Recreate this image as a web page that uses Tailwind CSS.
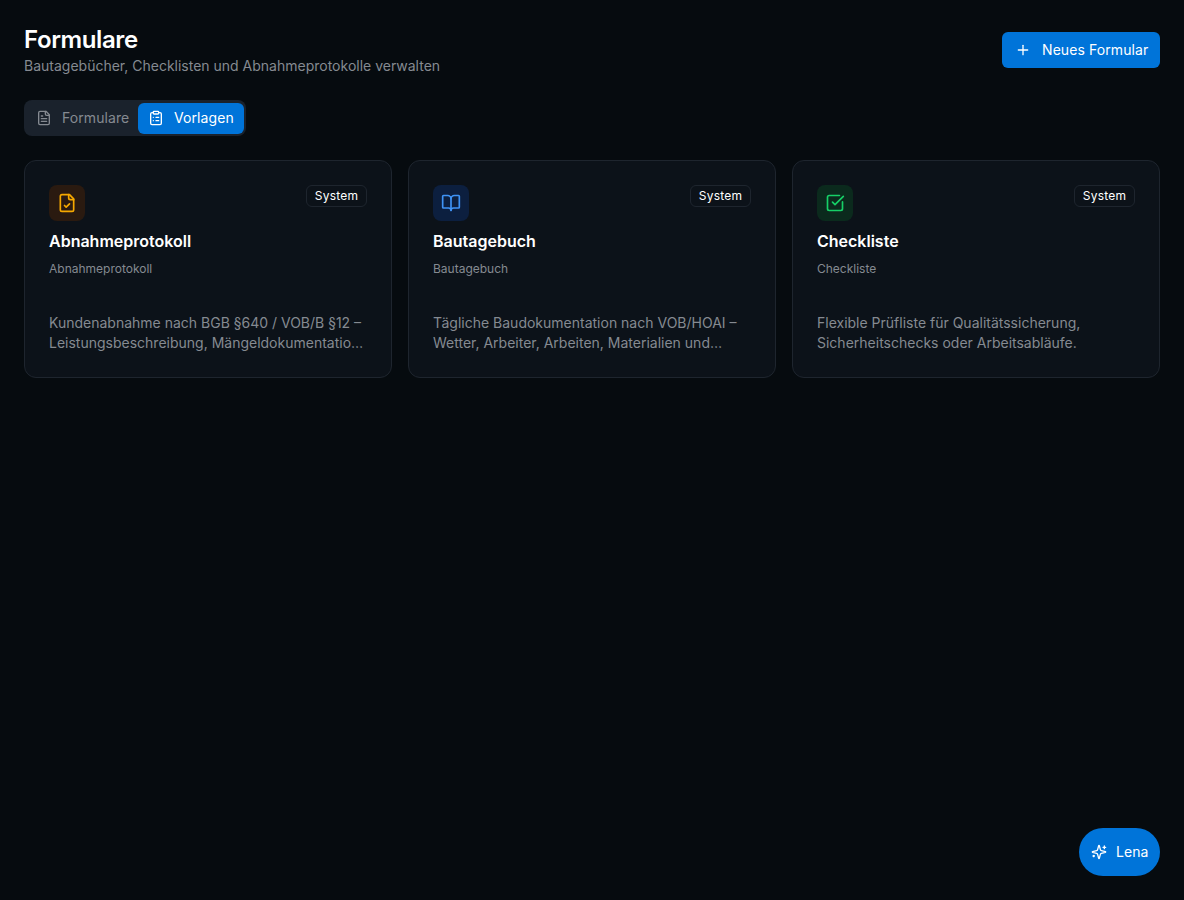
<!DOCTYPE html>
<html lang="de">
<head>
  <meta charset="UTF-8">
  <meta name="viewport" content="width=device-width, initial-scale=1.0">
  <title>Formulare</title>
  <script src="https://cdn.jsdelivr.net/npm/@tailwindcss/browser@4"></script>
</head>
<body class="bg-[#060b0f] font-['Inter',sans-serif] text-white min-h-[900px] overflow-hidden">
  <main class="p-6">
    <!-- Kopf -->
    <div class="flex items-start justify-between">
      <div>
        <h1 class="text-2xl leading-8 font-semibold tracking-[-0.4px]">Formulare</h1>
        <p class="text-sm leading-5 text-[#858a91]">Bautagebücher, Checklisten und Abnahmeprotokolle verwalten</p>
      </div>
      <button class="mt-2 h-9 w-[158px] flex items-center gap-[11px] pl-[13px] rounded-md bg-[#0074d9] text-sm tracking-[0.08px]">
        <svg class="size-4" viewBox="0 0 24 24" fill="none" stroke="currentColor" stroke-width="2" stroke-linecap="round" stroke-linejoin="round"><path d="M5 12h14"/><path d="M12 5v14"/></svg>
        Neues Formular
      </button>
    </div>

    <!-- Tabs -->
    <div class="mt-6 flex h-9 w-[222px] items-start rounded-lg bg-[#1a222c] pt-[3px] pl-1 pr-[2px]">
      <div class="flex flex-1 h-[30px] items-center gap-2 pl-2 text-sm tracking-[0.08px] text-[#858a91]">
        <svg class="size-4" viewBox="0 0 24 24" fill="none" stroke="currentColor" stroke-width="2" stroke-linecap="round" stroke-linejoin="round"><path d="M15 2H6a2 2 0 0 0-2 2v16a2 2 0 0 0 2 2h12a2 2 0 0 0 2-2V7Z"/><path d="M14 2v4a2 2 0 0 0 2 2h4"/><path d="M10 9H8"/><path d="M16 13H8"/><path d="M16 17H8"/></svg>
        <span class="ml-[2px]">Formulare</span>
      </div>
      <div class="flex w-[106px] h-[31px] items-center gap-2 pl-[10px] pb-px rounded-md bg-[#0074d9] text-sm tracking-[0.08px]">
        <svg class="size-4" viewBox="0 0 24 24" fill="none" stroke="currentColor" stroke-width="2" stroke-linecap="round" stroke-linejoin="round"><rect width="8" height="4" x="8" y="2" rx="1" ry="1"/><path d="M16 4h2a2 2 0 0 1 2 2v14a2 2 0 0 1-2 2H6a2 2 0 0 1-2-2V6a2 2 0 0 1 2-2h2"/><path d="M12 11h4"/><path d="M12 16h4"/><path d="M8 11h.01"/><path d="M8 16h.01"/></svg>
        <span class="ml-[2px]">Vorlagen</span>
      </div>
    </div>

    <!-- Vorlagen -->
    <div class="mt-6 grid grid-cols-3 gap-4">
      <div class="h-[218px] rounded-xl border border-[#1e252e] bg-[#0c1219] p-6">
        <div class="flex items-start justify-between">
          <div class="flex size-9 items-center justify-center rounded-lg bg-[#2a1a10] text-[#f5a800]">
            <svg class="size-5" viewBox="0 0 24 24" fill="none" stroke="currentColor" stroke-width="2" stroke-linecap="round" stroke-linejoin="round"><path d="M15 2H6a2 2 0 0 0-2 2v16a2 2 0 0 0 2 2h12a2 2 0 0 0 2-2V7Z"/><path d="M14 2v4a2 2 0 0 0 2 2h4"/><path d="m9 15 2 2 4-4"/></svg>
          </div>
          <span class="flex h-[22px] w-[61px] justify-center items-center rounded-md border border-[#1e252e] text-xs tracking-[0.2px]">System</span>
        </div>
        <h3 class="mt-2 text-base leading-6 font-semibold">Abnahmeprotokoll</h3>
        <p class="mt-[6px] text-xs leading-5 text-[#858a91]">Abnahmeprotokoll</p>
        <p class="mt-[34px] text-sm leading-5 text-[#858a91] line-clamp-2">Kundenabnahme nach BGB §640 / VOB/B §12 – Leistungsbeschreibung, Mängeldokumentation, Fristen und Unterschriften der Beteiligten.</p>
      </div>

      <div class="h-[218px] rounded-xl border border-[#1e252e] bg-[#0c1219] p-6">
        <div class="flex items-start justify-between">
          <div class="flex size-9 items-center justify-center rounded-lg bg-[#0c1f3f] text-[#3f93f5]">
            <svg class="size-5" viewBox="0 0 24 24" fill="none" stroke="currentColor" stroke-width="2" stroke-linecap="round" stroke-linejoin="round"><path d="M12 7v14"/><path d="M3 18a1 1 0 0 1-1-1V4a1 1 0 0 1 1-1h5a4 4 0 0 1 4 4 4 4 0 0 1 4-4h5a1 1 0 0 1 1 1v13a1 1 0 0 1-1 1h-6a3 3 0 0 0-3 3 3 3 0 0 0-3-3z"/></svg>
          </div>
          <span class="flex h-[22px] w-[61px] justify-center items-center rounded-md border border-[#1e252e] text-xs tracking-[0.2px]">System</span>
        </div>
        <h3 class="mt-2 text-base leading-6 font-semibold">Bautagebuch</h3>
        <p class="mt-[6px] text-xs leading-5 text-[#858a91]">Bautagebuch</p>
        <p class="mt-[34px] text-sm leading-5 text-[#858a91] line-clamp-2">Tägliche Baudokumentation nach VOB/HOAI – Wetter, Arbeiter, Arbeiten, Materialien und besondere Vorkommnisse auf der Baustelle.</p>
      </div>

      <div class="h-[218px] rounded-xl border border-[#1e252e] bg-[#0c1219] p-6">
        <div class="flex items-start justify-between">
          <div class="flex size-9 items-center justify-center rounded-lg bg-[#0b2a1d] text-[#16d067]">
            <svg class="size-5" viewBox="0 0 24 24" fill="none" stroke="currentColor" stroke-width="2" stroke-linecap="round" stroke-linejoin="round"><path d="M21 10.656V19a2 2 0 0 1-2 2H5a2 2 0 0 1-2-2V5a2 2 0 0 1 2-2h12.344"/><path d="m9 11 3 3L22 4"/></svg>
          </div>
          <span class="flex h-[22px] w-[61px] justify-center items-center rounded-md border border-[#1e252e] text-xs tracking-[0.2px]">System</span>
        </div>
        <h3 class="mt-2 text-base leading-6 font-semibold">Checkliste</h3>
        <p class="mt-[6px] text-xs leading-5 text-[#858a91]">Checkliste</p>
        <p class="mt-[34px] text-sm leading-5 text-[#858a91] line-clamp-2">Flexible Prüfliste für Qualitätssicherung, Sicherheitschecks oder Arbeitsabläufe.</p>
      </div>
    </div>
  </main>

  <!-- Assistent -->
  <button class="fixed right-6 bottom-6 flex h-12 w-[81px] items-center gap-2 pl-3 rounded-full bg-[#0074d9] text-sm tracking-[0.08px]">
    <svg class="size-4 shrink-0" viewBox="0 0 24 24" fill="none" stroke="currentColor" stroke-width="2" stroke-linecap="round" stroke-linejoin="round"><path d="M9.937 15.5A2 2 0 0 0 8.5 14.063l-6.135-1.582a.5.5 0 0 1 0-.962L8.5 9.936A2 2 0 0 0 9.937 8.5l1.582-6.135a.5.5 0 0 1 .963 0L14.063 8.5A2 2 0 0 0 15.5 9.937l6.135 1.581a.5.5 0 0 1 0 .964L15.5 14.063a2 2 0 0 0-1.437 1.437l-1.582 6.135a.5.5 0 0 1-.963 0z"/><path d="M20 3v4"/><path d="M22 5h-4"/><path d="M4 17v2"/><path d="M5 18H3"/></svg>
    <span class="ml-px">Lena</span>
  </button>
</body>
</html>
